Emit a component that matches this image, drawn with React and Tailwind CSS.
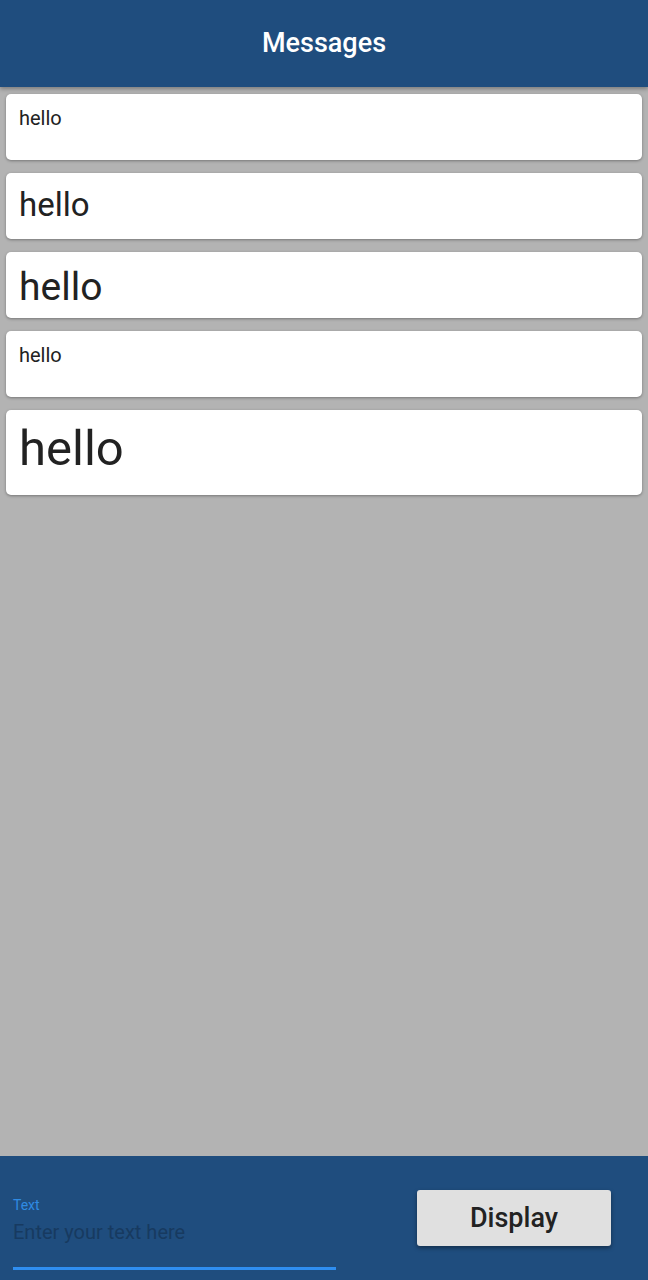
import { useState } from "react";

// Each message keeps its own font size, as in the reference list.
const messages = [
  { text: "hello", size: "text-[20px]", box: "h-[66px] pt-[12px]" },
  { text: "hello", size: "text-[33px]", box: "h-[66px] pt-[12px]" },
  { text: "hello", size: "text-[39px]", box: "h-[66px] pt-[12px]" },
  { text: "hello", size: "text-[20px]", box: "h-[66px] pt-[12px]" },
  { text: "hello", size: "text-[49px]", box: "h-[85px] pt-[10px]" },
];

function MessageCard({ text, size, box }) {
  return (
    <div
      className={`bg-white rounded-[5px] shadow-[0_1px_3px_rgba(0,0,0,0.35)] px-[13px] ${box}`}
    >
      <p className={`${size} leading-[1.2] text-[#222222]`}>{text}</p>
    </div>
  );
}

export default function App() {
  const [value, setValue] = useState("");

  return (
    <div
      className="h-[1280px] w-[648px] flex flex-col bg-[#b3b3b3]"
      style={{ fontFamily: "Roboto, 'Liberation Sans', sans-serif" }}
    >
      <header className="h-[87px] shrink-0 bg-[#1f4d7e] flex items-center justify-center shadow-[0_2px_4px_rgba(0,0,0,0.3)] relative z-10">
        <h1 className="text-white text-[27px] font-medium">Messages</h1>
      </header>

      <main className="flex-1 flex flex-col gap-[13px] px-[6px] pt-[7px]">
        {messages.map((m, i) => (
          <MessageCard key={i} {...m} />
        ))}
      </main>

      <footer className="h-[124px] shrink-0 bg-[#1f4d7e] flex items-start pl-[13px] pr-[37px]">
        <div className="w-[323px] pt-[40px]">
          <label className="block text-[14px] leading-[18px] text-[#2f8be3]">Text</label>
          <input
            value={value}
            onChange={(e) => setValue(e.target.value)}
            placeholder="Enter your text here"
            className="w-full bg-transparent outline-none text-[20px] leading-[28px] mt-[4px] pb-[21px] text-white placeholder:text-[#173a60] border-b-[3px] border-[#2f8ef0]"
          />
        </div>
        <button className="ml-auto mt-[34px] w-[194px] h-[56px] bg-[#e0e0e0] rounded-[3px] shadow-[0_2px_4px_rgba(0,0,0,0.4)] text-[27px] font-medium text-[#222222]">
          Display
        </button>
      </footer>
    </div>
  );
}
